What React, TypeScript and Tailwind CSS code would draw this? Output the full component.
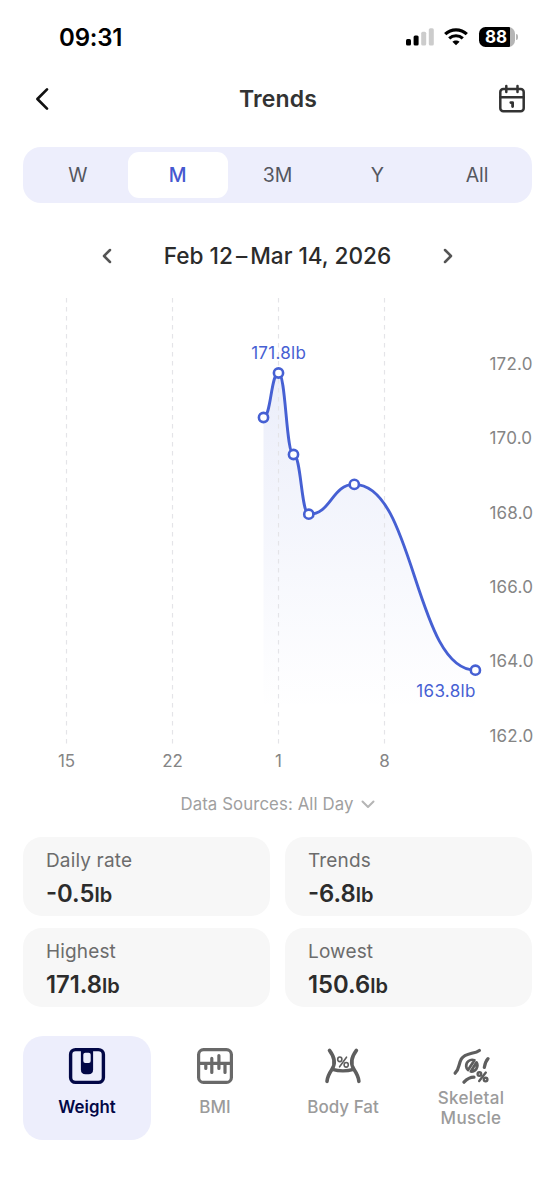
import type { ReactNode } from "react";

const RANGES = ["W", "M", "3M", "Y", "All"];

const STATS = [
  { label: "Daily rate", value: "-0.5" },
  { label: "Trends", value: "-6.8" },
  { label: "Highest", value: "171.8" },
  { label: "Lowest", value: "150.6" },
];

const POINTS = [
  [263.5, 417.5],
  [278.5, 373],
  [293.5, 454.5],
  [308.8, 514.2],
  [354.3, 484.4],
  [475.4, 670.2],
];

const X_TICKS = [
  { x: 66.5, label: "15" },
  { x: 172.5, label: "22" },
  { x: 278.5, label: "1" },
  { x: 384.5, label: "8" },
];

const Y_TICKS = ["172.0", "170.0", "168.0", "166.0", "164.0", "162.0"];

const LINE =
  "M263.5 417.5C271 417.5 271 373 278.5 373C286 373 286 454.5 293.5 454.5C301.2 454.5 301.2 514.2 308.8 514.2C331.5 514.2 331.5 484.4 354.3 484.4C414.8 484.4 414.8 670.2 475.4 670.2";

function StatusBar() {
  return (
    <div className="flex h-[74px] items-center justify-between pl-[59px] pr-[37px]">
      <span className="pt-[2px] text-[24px] font-semibold leading-none tracking-[-0.2px] text-black">09:31</span>
      <div className="flex items-center">
        <svg className="h-[20px] w-[30px]" viewBox="0 0 30 20">
          <rect x="1" y="12" width="5" height="6.5" rx="1.5" fill="#000" />
          <rect x="8.6" y="8.6" width="5" height="9.9" rx="1.5" fill="#000" />
          <rect x="16.2" y="4.8" width="5" height="13.7" rx="1.5" fill="#ccc" />
          <rect x="23.8" y="1.2" width="5" height="17.3" rx="1.5" fill="#ccc" />
        </svg>
        <svg className="ml-[8px] h-[20px] w-[26px]" viewBox="0 0 26 20" fill="none" stroke="#000">
          <path d="M2.2 7.1C8.2 1.4 17.8 1.4 23.8 7.1" strokeWidth="3.2" />
          <path d="M6.2 11.4C10 7.9 16 7.9 19.8 11.4" strokeWidth="3.1" />
          <path d="M13 18.3L9.4 14.8C11.4 13 14.6 13 16.6 14.8Z" fill="#000" stroke="none" />
        </svg>
        <div className="ml-[10px] flex h-[20px] w-[36px] items-center justify-center rounded-[6.5px] bg-[linear-gradient(90deg,#000_86%,#b5b5b5_86%)] pr-[2px] text-[17px] font-bold leading-none text-white">
          88
        </div>
        <div className="ml-[1px] h-[6px] w-[2px] rounded-r-full bg-[#b5b5b5]" />
      </div>
    </div>
  );
}

function Header() {
  return (
    <header className="flex h-[49px] items-center justify-between pl-[34px] pr-[30px]">
      <svg className="h-[26px] w-[26px]" viewBox="0 0 26 26" fill="none" stroke="#111" strokeWidth="2.7" strokeLinecap="round" strokeLinejoin="round">
        <path d="M13 3.4L3.4 13L13 22.6" />
      </svg>
      <h1 className="mr-[3px] pt-[2px] text-[23px] font-semibold leading-none tracking-[0.1px] text-[#333]">Trends</h1>
      <svg className="h-[30px] w-[26px]" viewBox="0 0 26 30" fill="none" stroke="#333" strokeWidth="2.5" strokeLinecap="round" strokeLinejoin="round">
        <rect x="1.3" y="4.9" width="23.4" height="22.4" rx="3" />
        <path d="M1.3 13.2H24.7M7.3 2V8M18.5 2V8" />
        <path d="M11.8 18.6H13.6V22.6" strokeWidth="2.8" />
      </svg>
    </header>
  );
}

function RangeTabs() {
  return (
    <div className="mx-[23px] mt-[24px] flex h-[56px] rounded-[18px] bg-[#edeefc] p-[5px]">
      {RANGES.map((r) => (
        <button
          key={r}
          className={
            r === "M"
              ? "flex-1 rounded-[11px] bg-white pt-[2px] text-[19.5px] font-medium text-[#4658cf]"
              : "flex-1 rounded-[11px] pt-[2px] text-[19.5px] text-[#55575f]"
          }
        >
          {r}
        </button>
      ))}
    </div>
  );
}

function DateRange() {
  return (
    <div className="flex h-[106px] items-center justify-between px-[102px]">
      <svg className="h-[16px] w-[10px]" viewBox="0 0 10 16" fill="none" stroke="#555" strokeWidth="2.5" strokeLinecap="round" strokeLinejoin="round">
        <path d="M8 2L2 8L8 14" />
      </svg>
      <span className="whitespace-nowrap pt-[1px] text-[22.6px] font-medium leading-none text-[#2b2b2b]">
        Feb 12<span className="mx-[3px]">–</span>Mar 14, 2026
      </span>
      <svg className="h-[16px] w-[10px]" viewBox="0 0 10 16" fill="none" stroke="#555" strokeWidth="2.5" strokeLinecap="round" strokeLinejoin="round">
        <path d="M2 2L8 8L2 14" />
      </svg>
    </div>
  );
}

function Chart() {
  return (
    <svg className="-mt-[19px] block h-[490px] w-[555px]" viewBox="0 290 555 490">
      <defs>
        <linearGradient id="area" gradientUnits="userSpaceOnUse" x1="0" y1="373" x2="0" y2="710">
          <stop offset="0" stopColor="#4a63d3" stopOpacity="0.11" />
          <stop offset="1" stopColor="#4a63d3" stopOpacity="0" />
        </linearGradient>
      </defs>
      <path d={`${LINE}V736H263.5Z`} fill="url(#area)" />
      {X_TICKS.map((t) => (
        <g key={t.label}>
          <line x1={t.x} x2={t.x} y1="298" y2="744" stroke="#e4e4e8" strokeWidth="1.2" strokeDasharray="4.5 4.5" />
          <text x={t.x} y="767" textAnchor="middle" fontSize="17" fill="#858585">
            {t.label}
          </text>
        </g>
      ))}
      {Y_TICKS.map((t, i) => (
        <text key={t} x="489.5" y={370 + i * 74.35} fontSize="17" letterSpacing="0.2" fill="#858585">
          {t}
        </text>
      ))}
      <path d={LINE} fill="none" stroke="#4660d3" strokeWidth="2.9" />
      {POINTS.map(([x, y]) => (
        <circle key={x} cx={x} cy={y} r="4.6" fill="#fff" stroke="#4660d3" strokeWidth="2.6" />
      ))}
      <text x="278.7" y="359" textAnchor="middle" fontSize="17" letterSpacing="0.3" fill="#4660d3">
        171.8lb
      </text>
      <text x="475.6" y="697" textAnchor="end" fontSize="17" letterSpacing="0.3" fill="#4660d3">
        163.8lb
      </text>
    </svg>
  );
}

function Stats() {
  return (
    <div className="mx-[23px] grid grid-cols-2 gap-x-[15px] gap-y-[12.5px]">
      {STATS.map((s) => (
        <div key={s.label} className="flex h-[78.5px] flex-col rounded-[19px] bg-[#f7f7f7] px-[23px] pt-[12px]">
          <span className="text-[19px] leading-[24px] tracking-[0.15px] text-[#6c6c6c]">{s.label}</span>
          <span className="mt-[6px] text-[23.8px] font-semibold leading-[30px] text-[#2c2c2c]">
            {s.value}
            <span className="text-[20px]">lb</span>
          </span>
        </div>
      ))}
    </div>
  );
}

function WeightIcon() {
  return (
    <svg className="h-[38px] w-[38px]" viewBox="0 0 38 38" fill="none">
      <rect x="2.6" y="2.6" width="32.8" height="32.8" rx="5" stroke="#020746" strokeWidth="3.4" />
      <path d="M12.9 3H25.1V22.5Q25.1 27.2 20.5 27.2H17.5Q12.9 27.2 12.9 22.5Z" fill="#020746" />
      <rect x="15.3" y="5.7" width="7.4" height="10.4" rx="2" fill="#edeefc" />
    </svg>
  );
}

function BmiIcon() {
  return (
    <svg className="h-[38px] w-[38px]" viewBox="0 0 38 38" fill="none" stroke="#696969" strokeLinecap="round">
      <rect x="2.6" y="2.6" width="32.8" height="32.8" rx="5" strokeWidth="3.2" />
      <path d="M3 16.4H35M9.8 17V21.4M15.8 11.4V25.4M22.9 8.6V21.4M29 17V25.4" strokeWidth="3.2" />
    </svg>
  );
}

function BodyFatIcon() {
  return (
    <svg className="h-[38px] w-[38px]" viewBox="0 0 38 38" fill="none" stroke="#5e5e5e" strokeLinecap="round">
      <path d="M5.5 3.4C10.8 10.5 11.8 16.5 8 22.2C4.8 27 3.2 30.3 3 34.4" strokeWidth="3.6" />
      <path d="M32.4 3.4C27.1 10.5 26.1 16.5 29.9 22.2C33.1 27 34.7 30.3 34.9 34.4" strokeWidth="3.6" />
      <path d="M8.3 22.4Q19 25.3 29.6 22.4" strokeWidth="3.2" />
      <g strokeWidth="1.6">
        <ellipse cx="15.8" cy="12.3" rx="2.1" ry="2.3" />
        <ellipse cx="22.2" cy="17.8" rx="2.1" ry="2.3" />
        <path d="M22.5 10.2L15.6 19.8" />
      </g>
    </svg>
  );
}

function MuscleIcon() {
  return (
    <svg className="h-[38px] w-[38px]" viewBox="0 0 38 38" fill="none" stroke="#5e5e5e" strokeLinecap="round">
      <path d="M27.4 3.4C22 7.5 13.5 5.2 9.2 12.2C6.2 17.4 7.7 21.7 3.1 26.2" strokeWidth="3.2" />
      <path d="M36 11.6C33.6 14.2 32.8 17.3 32.3 20.4M12 35.2C14.8 32.2 18.2 30.2 22 30.2" strokeWidth="3.2" />
      <path d="M22.4 13.2C18.2 11.6 13.9 14.8 14.2 19.4C14.3 20.9 15 22.1 16 23Z" strokeWidth="2.7" strokeLinejoin="round" />
      <path d="M24.5 15.3C27.1 19.6 23.6 24.9 18.8 24.5Z" strokeWidth="2.7" strokeLinejoin="round" />
      <g strokeWidth="2.4">
        <circle cx="27.4" cy="27" r="1.8" />
        <circle cx="33.6" cy="32.6" r="1.8" />
        <path d="M33.8 25.6L27.2 34" />
      </g>
    </svg>
  );
}

function Metric({ icon, active, tight, children }: { icon: ReactNode; active?: boolean; tight?: boolean; children: ReactNode }) {
  return (
    <button className={`flex h-[104px] w-[128px] flex-col items-center rounded-[20px] pt-[11px] ${active ? "bg-[#edeefc]" : ""}`}>
      {icon}
      <span
        className={`leading-[20px] ${tight ? "mt-[3px] tracking-[0.3px]" : "mt-[12px]"} ${active ? "text-[16.8px] font-semibold text-[#020746]" : "text-[17px] font-medium text-[#9b9b9b]"}`}
      >
        {children}
      </span>
    </button>
  );
}

export default function App() {
  return (
    <main className="h-[1200px] w-[555px] overflow-hidden bg-white font-['Inter',sans-serif]">
      <StatusBar />
      <Header />
      <RangeTabs />
      <DateRange />
      <Chart />
      <button className="flex h-[57px] w-full items-center justify-center gap-[7px] pb-[8px] text-[16.8px] tracking-[0.1px] text-[#a0a0a0]">
        <span className="pt-[1px]">Data Sources: All Day</span>
        <svg className="h-[9px] w-[14px]" viewBox="0 0 14 9" fill="none" stroke="#b5b5b5" strokeWidth="2" strokeLinecap="round" strokeLinejoin="round">
          <path d="M1.5 1.5L7 7L12.5 1.5" />
        </svg>
      </button>
      <Stats />
      <nav className="ml-[23px] mt-[29.5px] flex">
        <Metric icon={<WeightIcon />} active>Weight</Metric>
        <Metric icon={<BmiIcon />}>BMI</Metric>
        <Metric icon={<BodyFatIcon />}>Body Fat</Metric>
        <Metric icon={<MuscleIcon />} tight>
          Skeletal
          <br />
          Muscle
        </Metric>
      </nav>
    </main>
  );
}
